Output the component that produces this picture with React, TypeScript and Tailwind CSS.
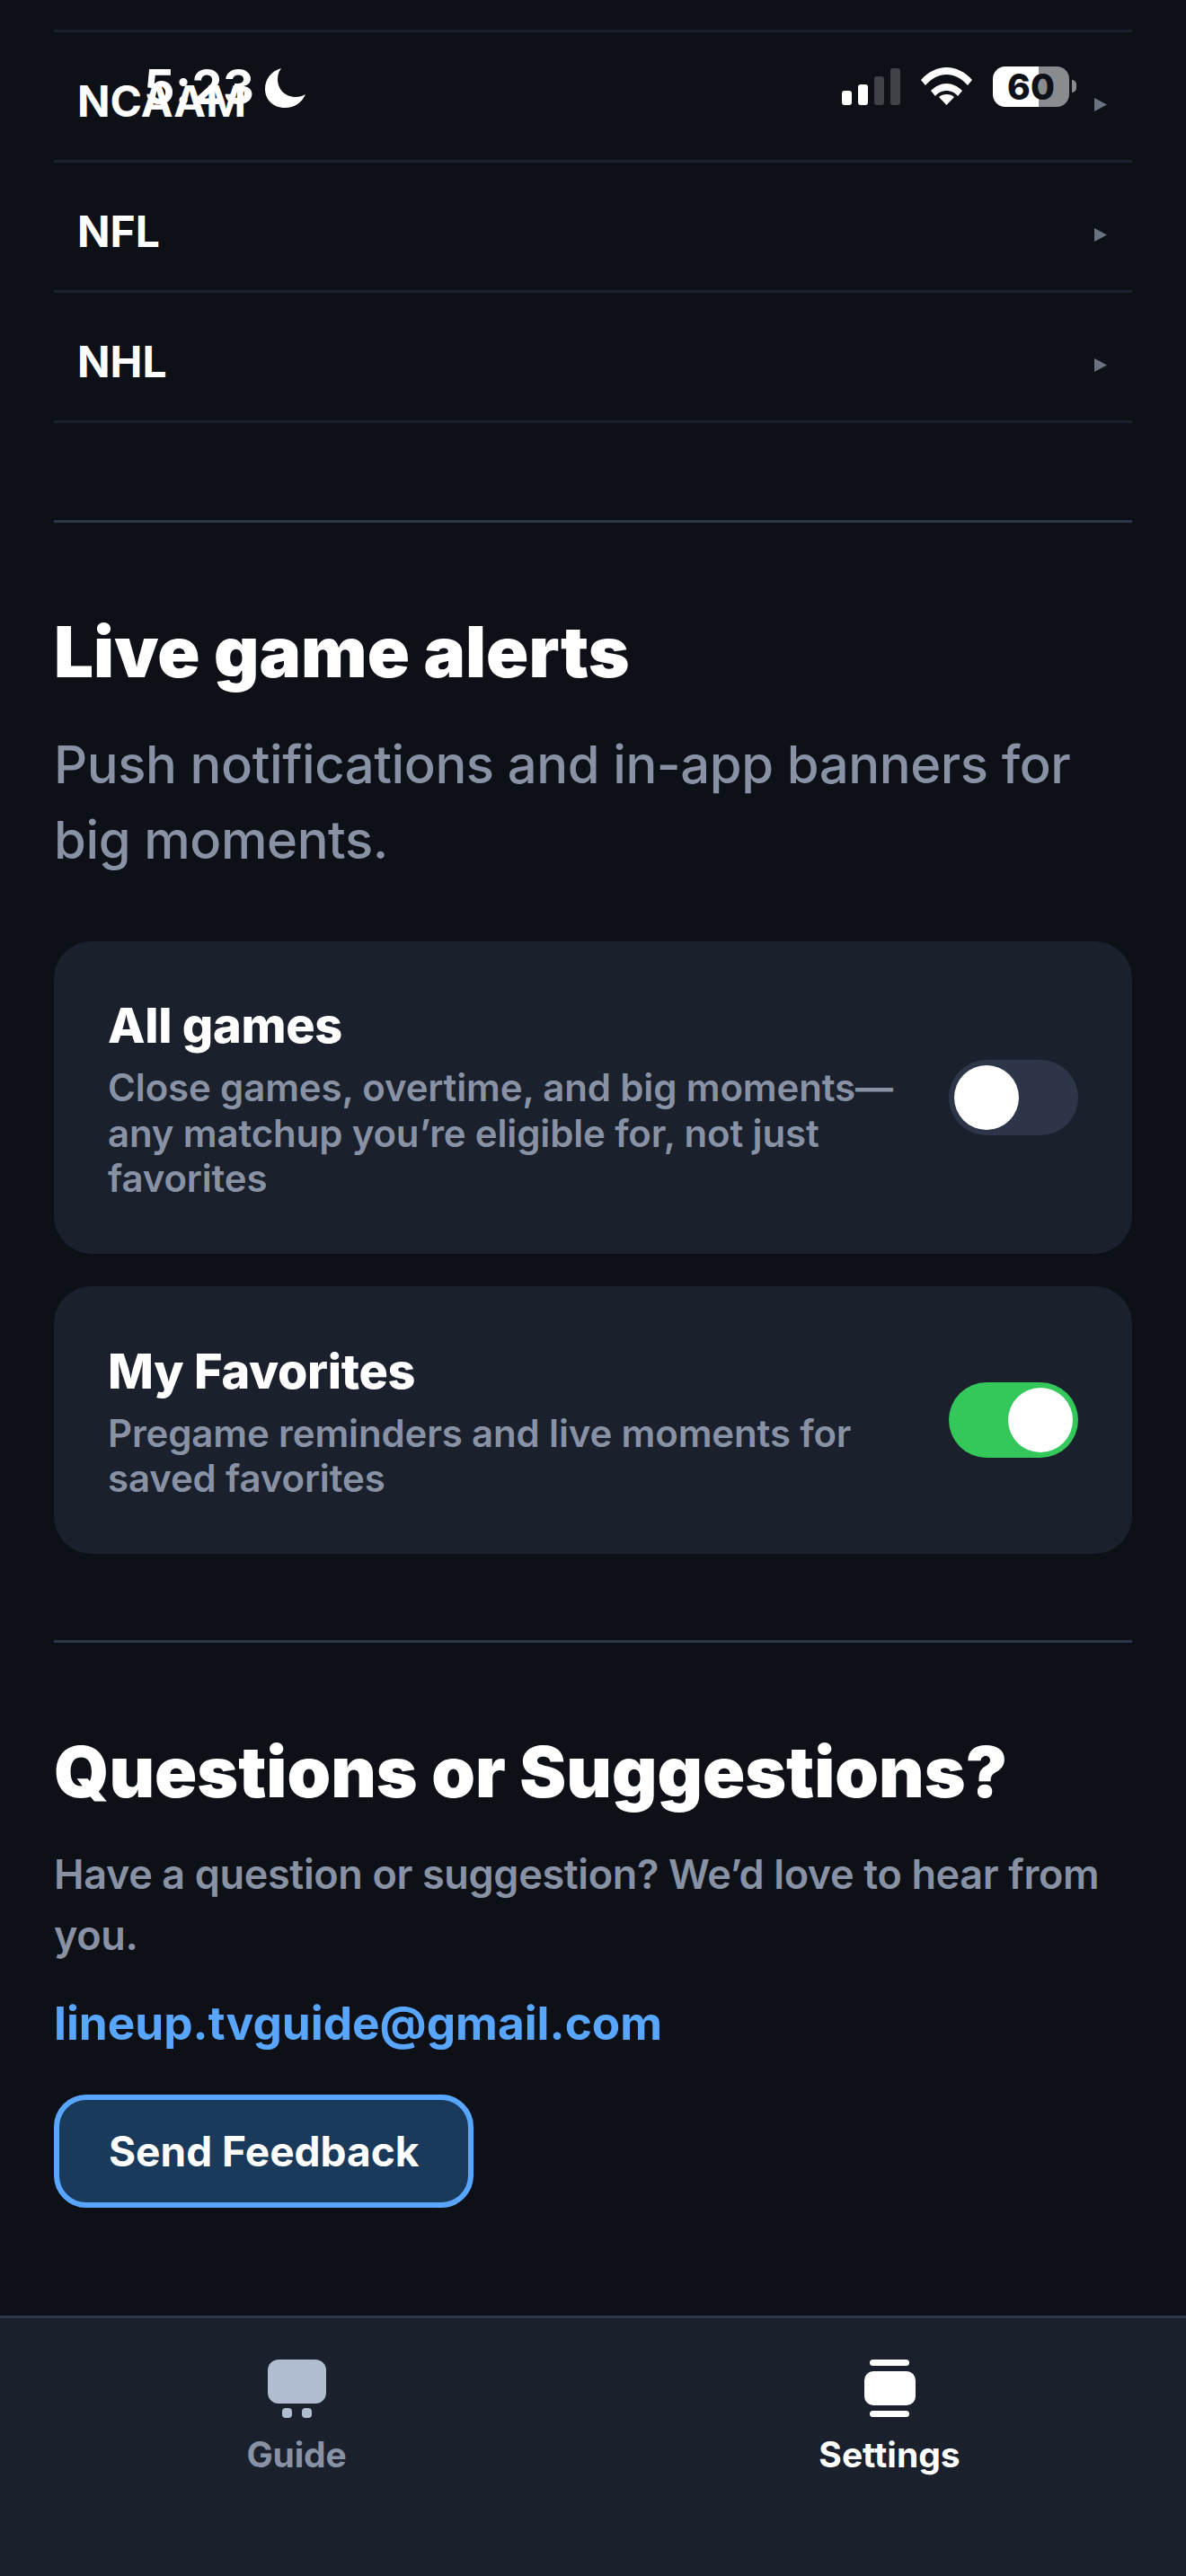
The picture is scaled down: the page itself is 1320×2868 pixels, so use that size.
const LEAGUES = ['NCAAM', 'NFL', 'NHL'];

const LeagueRow = ({ name }: { name: string }) => (
  <div className="flex h-[145px] items-center justify-between border-b-[3px] border-[#1a202c] pl-[26px] pr-[28px] pt-[12px]">
    <span className="text-[48px] font-bold leading-[58px] text-white">{name}</span>
    <svg className="mt-[6px] h-[15px] w-[14px]" viewBox="0 0 14 15">
      <polygon points="0,0 14,7.500 0,15" fill="#6b7280" />
    </svg>
  </div>
);

const Toggle = ({ on }: { on: boolean }) => (
  <div
    className={`flex h-[84px] w-[144px] shrink-0 items-center rounded-full p-[6px] ${
      on ? 'justify-end bg-[#34c759]' : 'justify-start bg-[#2d3548]'
    }`}
  >
    <div className="h-[72px] w-[72px] rounded-full bg-white" />
  </div>
);

const AlertCard = ({
  title,
  description,
  on,
  height,
}: {
  title: string;
  description: string;
  on: boolean;
  height: string;
}) => (
  <div className={`flex items-center justify-between rounded-[42px] bg-[#1a202c] px-[60px] ${height}`}>
    <div className="w-[880px]">
      <div className="text-[54px] font-extrabold leading-[72px] tracking-[-0.3px] text-white">{title}</div>
      <div className="mt-[8px] text-[42px] font-semibold leading-[50.400px] tracking-[-0.15px] text-[#8892a4]">
        {description}
      </div>
    </div>
    <Toggle on={on} />
  </div>
);

const StatusBar = () => (
  <div className="absolute left-0 top-0 h-[130px] w-full text-white">
    <span className="absolute left-[160px] top-[65px] text-[54px] font-bold leading-[64px] tracking-[0.5px]">5:23</span>
    <svg className="absolute left-[295px] top-[76px] h-[44px] w-[45px]" viewBox="0 0 45 44">
      <path d="M18 0C7 3 0 12 0 23c0 12 9 21 22 21 11 0 19-6 23-15-3 2-7 3-11 3C22 32 14 23 14 12c0-4 1-8 4-12z" fill="#fff" />
    </svg>
    <div className="absolute left-[937px] top-[76px] flex h-[41px] items-end gap-[7px]">
      <div className="h-[16px] w-[11px] rounded-[3px] bg-white" />
      <div className="h-[23px] w-[11px] rounded-[3px] bg-white" />
      <div className="h-[32px] w-[11px] rounded-[3px] bg-[#3f4246]" />
      <div className="h-[41px] w-[11px] rounded-[3px] bg-[#3f4246]" />
    </div>
    <svg className="absolute left-[1025px] top-[75px] h-[42px] w-[57px]" viewBox="0 0 57 42">
      <path d="M0 14C8 5 18 0 28.500 0S49 5 57 14l-5 6C45 12 37 8 28.500 8S12 12 5 20z" fill="#fff" />
      <path d="M11 26c5-5 11-8 17.500-8S41 21 46 26l-5 6c-3-4-8-6-12.500-6S19 28 16 32z" fill="#fff" />
      <path d="M20 33c2-2 5-3 8.500-3s6.500 1 8.500 3l-8.500 9z" fill="#fff" />
    </svg>
    <div className="absolute left-[1105px] top-[74px] flex h-[45px] w-[85px] items-center justify-center overflow-hidden rounded-[14px] bg-[linear-gradient(90deg,#ffffff_60%,#8a8b8e_60%)]">
      <span className="text-[39px] font-extrabold leading-[45px] text-[#0d1117]">60</span>
    </div>
    <div className="absolute left-[1193px] top-[89px] h-[14px] w-[5px] rounded-r-full bg-[#8a8b8e]" />
  </div>
);

const GuideIcon = () => (
  <svg className="h-[65px] w-[65px]" viewBox="0 0 65 65">
    <rect x="0" y="0" width="65" height="49" rx="12" fill="#b0bccf" />
    <rect x="16" y="54" width="11" height="11" rx="4" fill="#b0bccf" />
    <rect x="38" y="54" width="11" height="11" rx="4" fill="#b0bccf" />
  </svg>
);

const SettingsIcon = () => (
  <svg className="h-[65px] w-[65px]" viewBox="0 0 65 65">
    <rect x="10" y="0" width="44" height="7" rx="3.500" fill="#fff" />
    <rect x="4" y="13" width="57" height="38" rx="10" fill="#fff" />
    <rect x="10" y="57" width="44" height="7" rx="3.500" fill="#fff" />
  </svg>
);

export default function App() {
  return (
    <div className="relative flex h-[2868px] w-[1320px] flex-col overflow-hidden bg-[#0d1117] font-['Inter',sans-serif]">
      <main className="flex-1 px-[60px] pt-[33px]">
        <div className="border-t-[3px] border-[#1a202c]">
          {LEAGUES.map((name) => (
            <LeagueRow key={name} name={name} />
          ))}
        </div>

        <section className="mt-[108px] border-t-[3px] border-[#2d3548] pt-[96px]">
          <h2 className="text-[78px] font-black leading-[96px] text-white">Live game alerts</h2>
          <p className="mt-[35px] text-[58px] font-medium leading-[84px] tracking-[-0.42px] text-[#8892a4]">
            Push notifications and in-app banners for big moments.
          </p>
          <div className="mt-[71px] flex flex-col gap-[36px]">
            <AlertCard
              title="All games"
              description="Close games, overtime, and big moments—any matchup you’re eligible for, not just favorites"
              on={false}
              height="h-[348px]"
            />
            <AlertCard
              title="My Favorites"
              description="Pregame reminders and live moments for saved favorites"
              on
              height="h-[298px]"
            />
          </div>
        </section>

        <section className="mt-[96px] border-t-[3px] border-[#2d3548] pt-[96px]">
          <h2 className="text-[78px] font-black leading-[96px] text-white">Questions or Suggestions?</h2>
          <p className="mt-[32px] text-[45px] font-semibold leading-[68px] tracking-[-0.36px] text-[#8892a4]">
            Have a question or suggestion? We’d love to hear from you.
          </p>
          <div className="mt-[31px] text-[51.300px] font-bold leading-[64px] text-[#58a6ff]">lineup.tvguide@gmail.com</div>
          <button className="mt-[48px] flex h-[126px] items-center rounded-[36px] border-[6px] border-[#58a6ff] bg-[#1a3a5c] px-[55px] text-[46px] font-bold text-white">
            Send Feedback
          </button>
        </section>
      </main>

      <nav className="grid h-[290px] grid-cols-2 border-t-[3px] border-[#2d3548] bg-[#1a202c] pt-[46px]">
        <div className="flex flex-col items-center">
          <GuideIcon />
          <span className="mt-[17px] text-[39px] font-bold leading-[48px] tracking-[-0.2px] text-[#8892a4]">Guide</span>
        </div>
        <div className="flex flex-col items-center">
          <SettingsIcon />
          <span className="mt-[17px] text-[39px] font-bold leading-[48px] text-white">Settings</span>
        </div>
      </nav>

      <StatusBar />
    </div>
  );
}
